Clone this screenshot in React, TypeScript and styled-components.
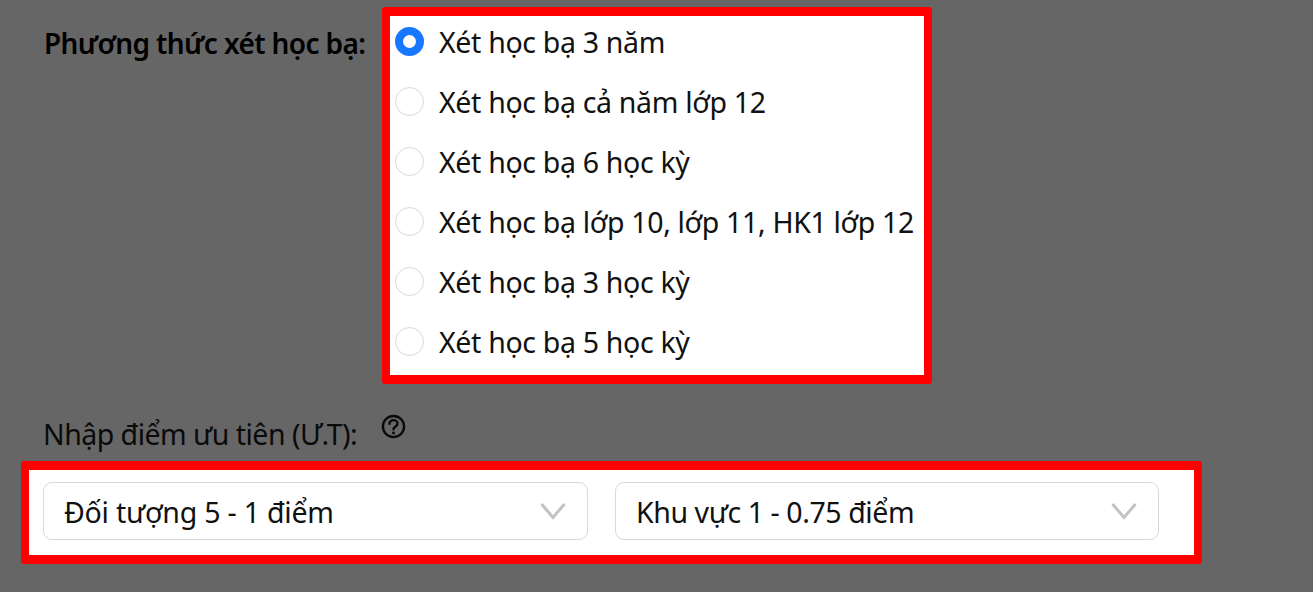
import React from "react";
import styled, { createGlobalStyle } from "styled-components";

const Global = createGlobalStyle`
  html, body { margin: 0; padding: 0; background: #666666; }
  body { font-family: "Noto Sans", "Open Sans", "Liberation Sans", sans-serif; color: #111; }
`;

const Page = styled.div`
  width: 1313px;
  height: 592px;
  overflow: hidden;
  background: #666666;
  padding: 7px 0 0 21px;
  box-sizing: border-box;
`;

const MethodRow = styled.div`
  display: flex;
  align-items: flex-start;
`;

const MethodLabel = styled.div`
  width: 361px;
  padding: 17px 0 0 23px;
  box-sizing: border-box;
  font-size: 28px;
  line-height: 38px;
  font-weight: 600;
  letter-spacing: -0.62px;
  color: #000;
  white-space: nowrap;
`;

const Highlight = styled.div`
  border-style: solid;
  border-color: #ff0000;
  border-width: 9px 8px;
  border-radius: 3px;
  background: #fff;
  box-sizing: border-box;
`;

const RadioList = styled(Highlight)`
  width: 550px;
  height: 377px;
  display: flex;
  flex-direction: column;
  gap: 9px;
`;

const RadioRow = styled.label`
  height: 51px;
  flex: none;
  display: flex;
  align-items: center;
  padding-left: 5px;
  gap: 15px;
  font-size: 28.5px;
  letter-spacing: -0.33px;
  color: #111;
  white-space: nowrap;
`;

const RadioDot = styled.span<{ $on?: boolean }>`
  width: 29px;
  height: 29px;
  flex: none;
  box-sizing: border-box;
  border-radius: 50%;
  background: #fff;
  border: ${(p) => (p.$on ? "8px solid #1677ff" : "1px solid #d9d9d9")};
`;

const PriorityRow = styled.div`
  display: flex;
  align-items: flex-start;
  height: 47px;
  padding-left: 22px;
  margin-top: 30px;
  font-size: 28.5px;
  letter-spacing: -0.52px;
  color: #0a0a0a;
`;

const PriorityLabel = styled.span`
  line-height: 40px;
  white-space: nowrap;
`;

const HelpIcon = styled.svg`
  width: 25px;
  height: 25px;
  margin: 0 0 0 24px;
  flex: none;
`;

const SelectBar = styled(Highlight)`
  width: 1181px;
  height: 103px;
  display: flex;
  align-items: center;
  gap: 27px;
  padding: 0 0 3px 14px;
`;

const SelectBox = styled.div`
  width: 545px;
  height: 58px;
  box-sizing: border-box;
  border: 1px solid #d9d9d9;
  border-radius: 9px;
  background: #fff;
  display: flex;
  align-items: center;
  justify-content: space-between;
  padding: 0 21px 0 20px;
  font-size: 28.5px;
  color: #111;
  white-space: nowrap;
  & + & {
    width: 544px;
  }
`;

const SelectText = styled.span<{ $spacing: number }>`
  padding-top: 2px;
  letter-spacing: ${(p) => p.$spacing}px;
`;

const Chevron = styled.svg`
  width: 26px;
  height: 18px;
  flex: none;
`;

const options = [
  "Xét học bạ 3 năm",
  "Xét học bạ cả năm lớp 12",
  "Xét học bạ 6 học kỳ",
  "Xét học bạ lớp 10, lớp 11, HK1 lớp 12",
  "Xét học bạ 3 học kỳ",
  "Xét học bạ 5 học kỳ",
];

const Arrow = () => (
  <Chevron viewBox="0 0 26 18" fill="none" stroke="#c2c2c2" strokeWidth="3">
    <path d="M1.5 2 L13 15.5 L24.5 2" />
  </Chevron>
);

export default function App() {
  return (
    <Page>
      <Global />
      <MethodRow>
        <MethodLabel>Phương thức xét học bạ:</MethodLabel>
        <RadioList>
          {options.map((o, i) => (
            <RadioRow key={o}>
              <RadioDot $on={i === 0} />
              {o}
            </RadioRow>
          ))}
        </RadioList>
      </MethodRow>
      <PriorityRow>
        <PriorityLabel>Nhập điểm ưu tiên (Ư.T):</PriorityLabel>
        <HelpIcon viewBox="0 0 26 26" fill="none" stroke="#0a0a0a" strokeWidth="2.5">
          <circle cx="13" cy="13" r="11" />
          <path d="M8.800 10.200c0-2.400 1.900-3.800 4.200-3.800s4.200 1.400 4.200 3.500c0 3.100-4.200 3-4.200 6" strokeLinecap="round" />
          <circle cx="13" cy="19.800" r="1.500" fill="#0a0a0a" stroke="none" />
        </HelpIcon>
      </PriorityRow>
      <SelectBar>
        <SelectBox>
          <SelectText $spacing={-0.22}>Đối tượng 5 - 1 điểm</SelectText>
          <Arrow />
        </SelectBox>
        <SelectBox>
          <SelectText $spacing={-0.42}>Khu vực 1 - 0.75 điểm</SelectText>
          <Arrow />
        </SelectBox>
      </SelectBar>
    </Page>
  );
}
